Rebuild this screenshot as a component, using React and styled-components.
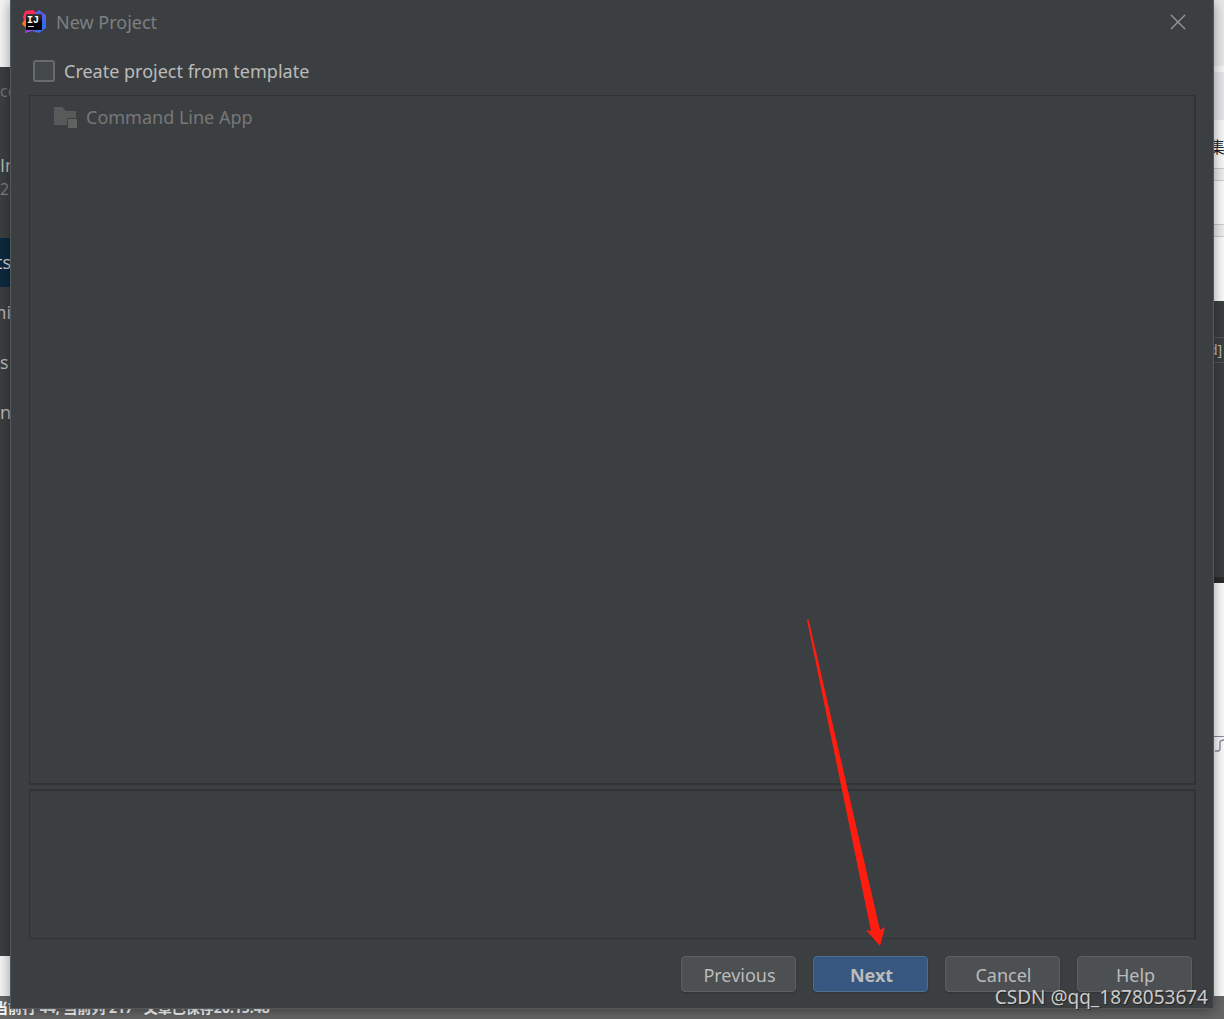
import React from 'react';
import styled, { createGlobalStyle } from 'styled-components';

const menu = [
  { text: 'ts', active: true, end: true },
  { text: 'mi', end: true },
  { text: 's' },
  { text: 'n' },
];

const actions = [
  { text: 'Previous' },
  { text: 'Next', primary: true },
  { text: 'Cancel' },
  { text: 'Help' },
];

const Logo = () => (
  <svg width="24" height="24" viewBox="0 0 24 24" aria-hidden="true">
    <defs>
      <linearGradient id="warm" x1="0" y1="0" x2="0" y2="1">
        <stop offset="0" stopColor="#fe2857" />
        <stop offset="0.42" stopColor="#fe315d" />
        <stop offset="0.5" stopColor="#f97a12" />
        <stop offset="0.7" stopColor="#f97a12" />
        <stop offset="0.8" stopColor="#b13aa0" />
        <stop offset="1" stopColor="#b22fd0" />
      </linearGradient>
      <linearGradient id="cold" x1="0" y1="1" x2="1" y2="0">
        <stop offset="0" stopColor="#c02fc8" />
        <stop offset="0.35" stopColor="#3a6cf0" />
        <stop offset="0.6" stopColor="#2f6df0" />
        <stop offset="1" stopColor="#7b52d8" />
      </linearGradient>
      <linearGradient id="tile" x1="0" y1="0" x2="0" y2="1">
        <stop offset="0" stopColor="#3a3a3a" />
        <stop offset="0.6" stopColor="#000" />
      </linearGradient>
    </defs>
    <path d="M3 1 L11 0 L15 4 L12 20 L3 23 L4 18 L0 14 L2 10 L1 7 Z" fill="url(#warm)" />
    <path d="M13 3 L17 0 L24 5 L24 18 L17 23 L10 21 L3 23 L5 18 L13 18 Z" fill="url(#cold)" />
    <rect x="4" y="4" width="16" height="16" fill="url(#tile)" />
    <text x="5" y="13" fill="#fff" fontFamily="Liberation Mono, monospace" fontWeight="700" fontSize="10">
      IJ
    </text>
    <rect x="6" y="16" width="6" height="1" fill="#ddd" />
  </svg>
);

const FolderIcon = () => (
  <svg width="24" height="22" viewBox="0 0 24 22" fill="#585a5a" aria-hidden="true">
    <path d="M0 1 H8 L12 5 H22 V12 H13 V19 H0 Z" />
    <rect x="14" y="13" width="9" height="9" fill="#606262" />
  </svg>
);

const CloseIcon = () => (
  <svg width="16" height="16" viewBox="0 0 16 16" stroke="#979797" strokeWidth="1.4" aria-hidden="true">
    <path d="M1 1 L15 15 M15 1 L1 15" />
  </svg>
);

const CurveIcon = () => (
  <svg width="9" height="14" viewBox="0 0 9 14" fill="none" stroke="#8c8ca0" strokeWidth="1.4" aria-hidden="true">
    <path d="M0 12 H3 Q5 12 5 9 V4 Q5 1 9 1" />
  </svg>
);

const Arrow = () => (
  <ArrowSvg width="80" height="328" viewBox="0 0 80 328" aria-hidden="true">
    <path d="M0 1 L1 0 L2 2 L73 311 L78 308 L73 327 L59 311 L64 312 Z" fill="#ff1d10" />
  </ArrowSvg>
);

export default function App() {
  return (
    <Desktop>
      <GlobalStyle />
      <Backdrop>
        <Windows>
          <LeftColumn>
            <PageEdge $height={67} />
            <WelcomeWindow>
              <Faded>co</Faded>
              <Product>In</Product>
              <Version>20</Version>
              {menu.map(item => (
                <MenuItem key={item.text} $active={item.active} $end={item.end}>{item.text}</MenuItem>
              ))}
            </WelcomeWindow>
            <PageEdge $height={40} />
          </LeftColumn>
          <RightColumn>
            <Band $height={66} $color="#e8e8e8" />
            <Band $height={6} $color="#f5f5f5" />
            <Band $height={48} $color="#e7e7eb" />
            <Band $height={48} $color="#f9f9fa">集</Band>
            <Band $height={12} $color="#eeeeee" $line />
            <Band $height={44} $color="#fbfbfb" $line />
            <Band $height={12} $color="#eeeeee" $line />
            <Band $height={65} $color="#fbfbfb" $line />
            <Editor>
              <EditorTab>d]</EditorTab>
            </Editor>
            <Note><CurveIcon /></Note>
          </RightColumn>
        </Windows>
        <StatusBar>当前行 44, 当前列 217 &nbsp; 文章已保存20:15:48</StatusBar>
      </Backdrop>

      <Dialog role="dialog" aria-labelledby="dialog-title">
        <TitleBar>
          <Logo />
          <Title id="dialog-title">New Project</Title>
          <CloseButton type="button" aria-label="Close"><CloseIcon /></CloseButton>
        </TitleBar>
        <Content>
          <TemplateOption htmlFor="template">
            <Checkbox id="template" type="checkbox" />
            Create project from template
          </TemplateOption>
          <TemplateList>
            <Template>
              <FolderIcon />
              Command Line App
            </Template>
          </TemplateList>
          <Description />
          <Footer>
            {actions.map(item => (
              <Button key={item.text} type="button" $primary={item.primary}>{item.text}</Button>
            ))}
          </Footer>
        </Content>
        <Arrow />
      </Dialog>
      <Watermark>CSDN @qq_1878053674</Watermark>
    </Desktop>
  );
}

const GlobalStyle = createGlobalStyle`
  * {
    box-sizing: border-box;
  }

  body {
    margin: 0;
    font-family: 'Noto Sans', 'Noto Sans CJK SC', sans-serif;
    font-size: 18px;
    line-height: 24px;
    color: #bbbbbb;
  }
`;
const Desktop = styled.div`
  position: relative;
  display: flex;
  min-height: 100vh;
  padding: 0 10px 10px;
  overflow: hidden;
`;
const Backdrop = styled.div`
  position: absolute;
  inset: 0;
  display: flex;
  flex-direction: column;
  background: #fbfbfb;
`;
const Windows = styled.div`
  flex: 1;
  display: flex;
  justify-content: space-between;
`;
const LeftColumn = styled.div`
  width: 11px;
  display: flex;
  flex-direction: column;
  overflow: hidden;
  white-space: nowrap;
`;
const PageEdge = styled.div`
  height: ${props => props.$height}px;
  background: #f4f4f4;
`;
const WelcomeWindow = styled.div`
  flex: 1;
  background: #3c3f41;
  font-family: 'Open Sans', sans-serif;
`;
const Faded = styled.div`
  padding: 12px 0 50px;
  font-size: 16px;
  color: #777777;
`;
const Product = styled.div`
  font-size: 18px;
`;
const Version = styled.div`
  height: 61px;
  font-size: 16px;
  color: #808080;
`;
const MenuItem = styled.div`
  display: flex;
  justify-content: ${props => props.$end ? 'flex-end' : 'flex-start'};
  height: 49px;
  margin-bottom: 1px;
  line-height: 49px;
  color: ${props => props.$active ? '#d0d0d0' : '#bbbbbb'};
  background: ${props => props.$active ? '#0d293e' : 'transparent'};
`;
const RightColumn = styled.div`
  width: 15px;
  display: flex;
  flex-direction: column;
  overflow: hidden;
`;
const Band = styled.div`
  height: ${props => props.$height}px;
  border-top: ${props => props.$line ? '1px solid #cccccc' : 'none'};
  background: ${props => props.$color};
  color: #222226;
  font-size: 16px;
  line-height: 54px;
`;
const Editor = styled.div`
  height: 282px;
  padding-top: 36px;
  border-bottom: 6px solid #2b2b2b;
  background: #3c3f41;
`;
const EditorTab = styled.div`
  height: 26px;
  border: solid #555555;
  border-width: 1px 0;
  font-size: 14px;
  text-align: right;
  padding-right: 2px;
`;
const Note = styled.div`
  display: flex;
  justify-content: flex-end;
  margin-top: 153px;
  padding-top: 2px;
  border-top: 1px solid #8c8ca0;
`;
const StatusBar = styled.div`
  height: 23px;
  margin-left: -6px;
  background: #666666;
  color: #ffffff;
  font-size: 14px;
  font-weight: 700;
  line-height: 23px;
  white-space: pre;
`;
const Dialog = styled.div`
  position: relative;
  flex: 1;
  display: flex;
  flex-direction: column;
  border: solid #55585a;
  border-width: 0 1px 1px;
  background: #3c3f41;
  box-shadow: 0 2px 12px rgba(0, 0, 0, 0.4);
`;
const TitleBar = styled.div`
  display: flex;
  align-items: center;
  gap: 10px;
  height: 44px;
  padding: 0 27px 0 11px;
`;
const Title = styled.div`
  flex: 1;
  color: #7d7f80;
`;
const CloseButton = styled.button`
  display: flex;
  padding: 0;
  border: none;
  background: none;
`;
const Content = styled.div`
  flex: 1;
  display: flex;
  flex-direction: column;
  padding: 15px 17px 16px 18px;
`;
const TemplateOption = styled.label`
  display: flex;
  align-items: center;
  gap: 9px;
  height: 24px;
  margin: 0 0 12px 4px;
  align-self: flex-start;
`;
const Checkbox = styled.input`
  appearance: none;
  width: 22px;
  height: 22px;
  margin: 0;
  border: 2px solid #6b6b6b;
  border-radius: 3px;
  background: #43494a;
`;
const TemplateList = styled.ul`
  flex: 1;
  margin: 0 0 4px;
  padding: 9px 24px;
  border: solid #323232;
  border-width: 1px 2px 2px 1px;
  list-style: none;
`;
const Template = styled.li`
  display: flex;
  align-items: center;
  gap: 8px;
  color: #777777;
`;
const Description = styled.div`
  height: 150px;
  border: solid #323232;
  border-width: 2px 2px 1px 1px;
`;
const Footer = styled.div`
  display: flex;
  justify-content: flex-end;
  gap: 17px;
  padding: 17px 4px 0 0;
`;
const Button = styled.button`
  width: 115px;
  height: 36px;
  padding: 2px 0 0 2px;
  border: 1px solid ${props => props.$primary ? '#4c708c' : '#5e6060'};
  border-radius: 4px;
  background: ${props => props.$primary ? '#365880' : '#4c5052'};
  box-shadow: 0 1px 2px rgba(0, 0, 0, 0.2);
  color: #bbbbbb;
  font-family: inherit;
  font-size: 18px;
  font-weight: ${props => props.$primary ? 700 : 400};
`;
const ArrowSvg = styled.svg`
  position: absolute;
  right: 326px;
  bottom: 61px;
  pointer-events: none;
`;
const Watermark = styled.div`
  position: absolute;
  right: 16px;
  bottom: 10px;
  font-size: 19px;
  color: #cccccc;
  text-shadow: 1px 1px 1px #222222;
`;
